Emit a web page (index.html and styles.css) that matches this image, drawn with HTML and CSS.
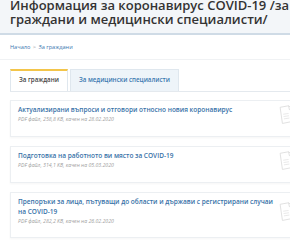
FILE: index.html
```html
<!DOCTYPE html>
<html lang="bg">
<head>
  <meta charset="UTF-8">
  <meta name="viewport" content="width=device-width, initial-scale=1.0">
  <title>Информация за коронавирус COVID-19</title>
  <link rel="stylesheet" href="styles.css">
</head>
<body>

  <div class="page-header">
    <h1>Информация за коронавирус COVID-19 /за граждани и медицински специалисти/</h1>
  </div>

  <div class="breadcrumb">
    <a href="#">Начало</a> <span class="sep">&gt;</span> <a href="#">За граждани</a>
  </div>

  <div class="content">
    <!-- Tabs -->
    <div class="tabs">
      <div class="tab active">За граждани</div>
      <div class="tab">За медицински специалисти</div>
    </div>

    <!-- Documents -->
    <div class="doc-list">
      <div class="doc">
        <div class="doc-text">
          <a href="#" class="doc-title">Актуализирани въпроси и отговори относно новия коронавирус</a>
          <div class="doc-meta">PDF файл, 258,8 KB, качен на 28.02.2020</div>
        </div>
        <svg class="doc-icon" viewBox="0 0 24 26"><path d="M5 3 L16 1 L21 5 L23 21 L8 24 Z M16 1 L17 6 L21 5" fill="none" stroke="#d8d8d8" stroke-width="1"/><path d="M9 12 l7 -1 M9.5 15 l7 -1 M10 18 l7 -1" stroke="#e2e2e2" stroke-width="1"/></svg>
      </div>

      <div class="doc">
        <div class="doc-text">
          <a href="#" class="doc-title">Подготовка на работното ви място за COVID-19</a>
          <div class="doc-meta">PDF файл, 314,1 KB, качен на 05.03.2020</div>
        </div>
        <svg class="doc-icon" viewBox="0 0 24 26"><path d="M5 3 L16 1 L21 5 L23 21 L8 24 Z M16 1 L17 6 L21 5" fill="none" stroke="#d8d8d8" stroke-width="1"/><path d="M9 12 l7 -1 M9.5 15 l7 -1 M10 18 l7 -1" stroke="#e2e2e2" stroke-width="1"/></svg>
      </div>

      <div class="doc">
        <div class="doc-text">
          <a href="#" class="doc-title">Препоръки за лица, пътуващи до области и държави с регистрирани случаи на COVID-19</a>
          <div class="doc-meta">PDF файл, 282,2 KB, качен на 26.02.2020</div>
        </div>
        <svg class="doc-icon" viewBox="0 0 24 26"><path d="M5 3 L16 1 L21 5 L23 21 L8 24 Z M16 1 L17 6 L21 5" fill="none" stroke="#d8d8d8" stroke-width="1"/><path d="M9 12 l7 -1 M9.5 15 l7 -1 M10 18 l7 -1" stroke="#e2e2e2" stroke-width="1"/></svg>
      </div>
    </div>
  </div>

</body>
</html>
```

FILE: styles.css
```css
body {
  font-family: "Open Sans", Arial, sans-serif;
  margin: 0;
  background-color: #ffffff;
  width: 320px;
  height: 240px;
  overflow: hidden;
}

a {
  text-decoration: none;
}

.page-header {
  background-color: #f3f6f9;
  border-bottom: 2px solid #cfdbe6;
  padding: 0 0 4px 10px;
  height: 29px;
  overflow: hidden;
}

.page-header h1 {
  margin: -2px 0 0;
  font-size: 13px;
  line-height: 14px;
  font-weight: 600;
  color: #333333;
}

.breadcrumb {
  padding: 9px 10px 9px;
  font-size: 5.6px;
  line-height: 6px;
  border-bottom: 1px solid #f0f2f4;
}

.breadcrumb a {
  color: #3b78b0;
}

.breadcrumb .sep {
  color: #999999;
  margin: 0 1px;
}

.content {
  padding: 9px 0 0 10px;
}

.tabs {
  display: flex;
  gap: 2px;
  border-bottom: 1px solid #e4e9ee;
}

.tab {
  font-size: 6.2px;
  font-weight: 600;
  padding: 7px 8px 8px;
  line-height: 6px;
  color: #3b78b0;
  background-color: #eef4f9;
  border: 1px solid #dfe7ee;
  border-bottom: none;
}

.tab.active {
  background-color: #ffffff;
  color: #444444;
  border-top: 2px solid #f3c54a;
  padding-top: 6px;
}

.doc-list {
  display: flex;
  flex-direction: column;
  gap: 9px;
  padding-top: 8px;
}

.doc {
  display: flex;
  align-items: center;
  border: 1px solid #eceff2;
  box-shadow: 0 1px 2px rgba(0, 0, 0, 0.04);
  padding: 4px 7px 11px 7px;
  background-color: #ffffff;
}

.doc-text {
  width: 260px;
  align-self: flex-start;
}

.doc-title {
  display: block;
  font-size: 6.5px;
  line-height: 10px;
  font-weight: 600;
  color: #3872a8;
}

.doc-meta {
  font-size: 5.2px;
  line-height: 9px;
  font-style: italic;
  color: #a0a0a0;
}

.doc-icon {
  width: 19px;
  height: 20px;
  margin-left: -2px;
  flex-shrink: 0;
}
```
